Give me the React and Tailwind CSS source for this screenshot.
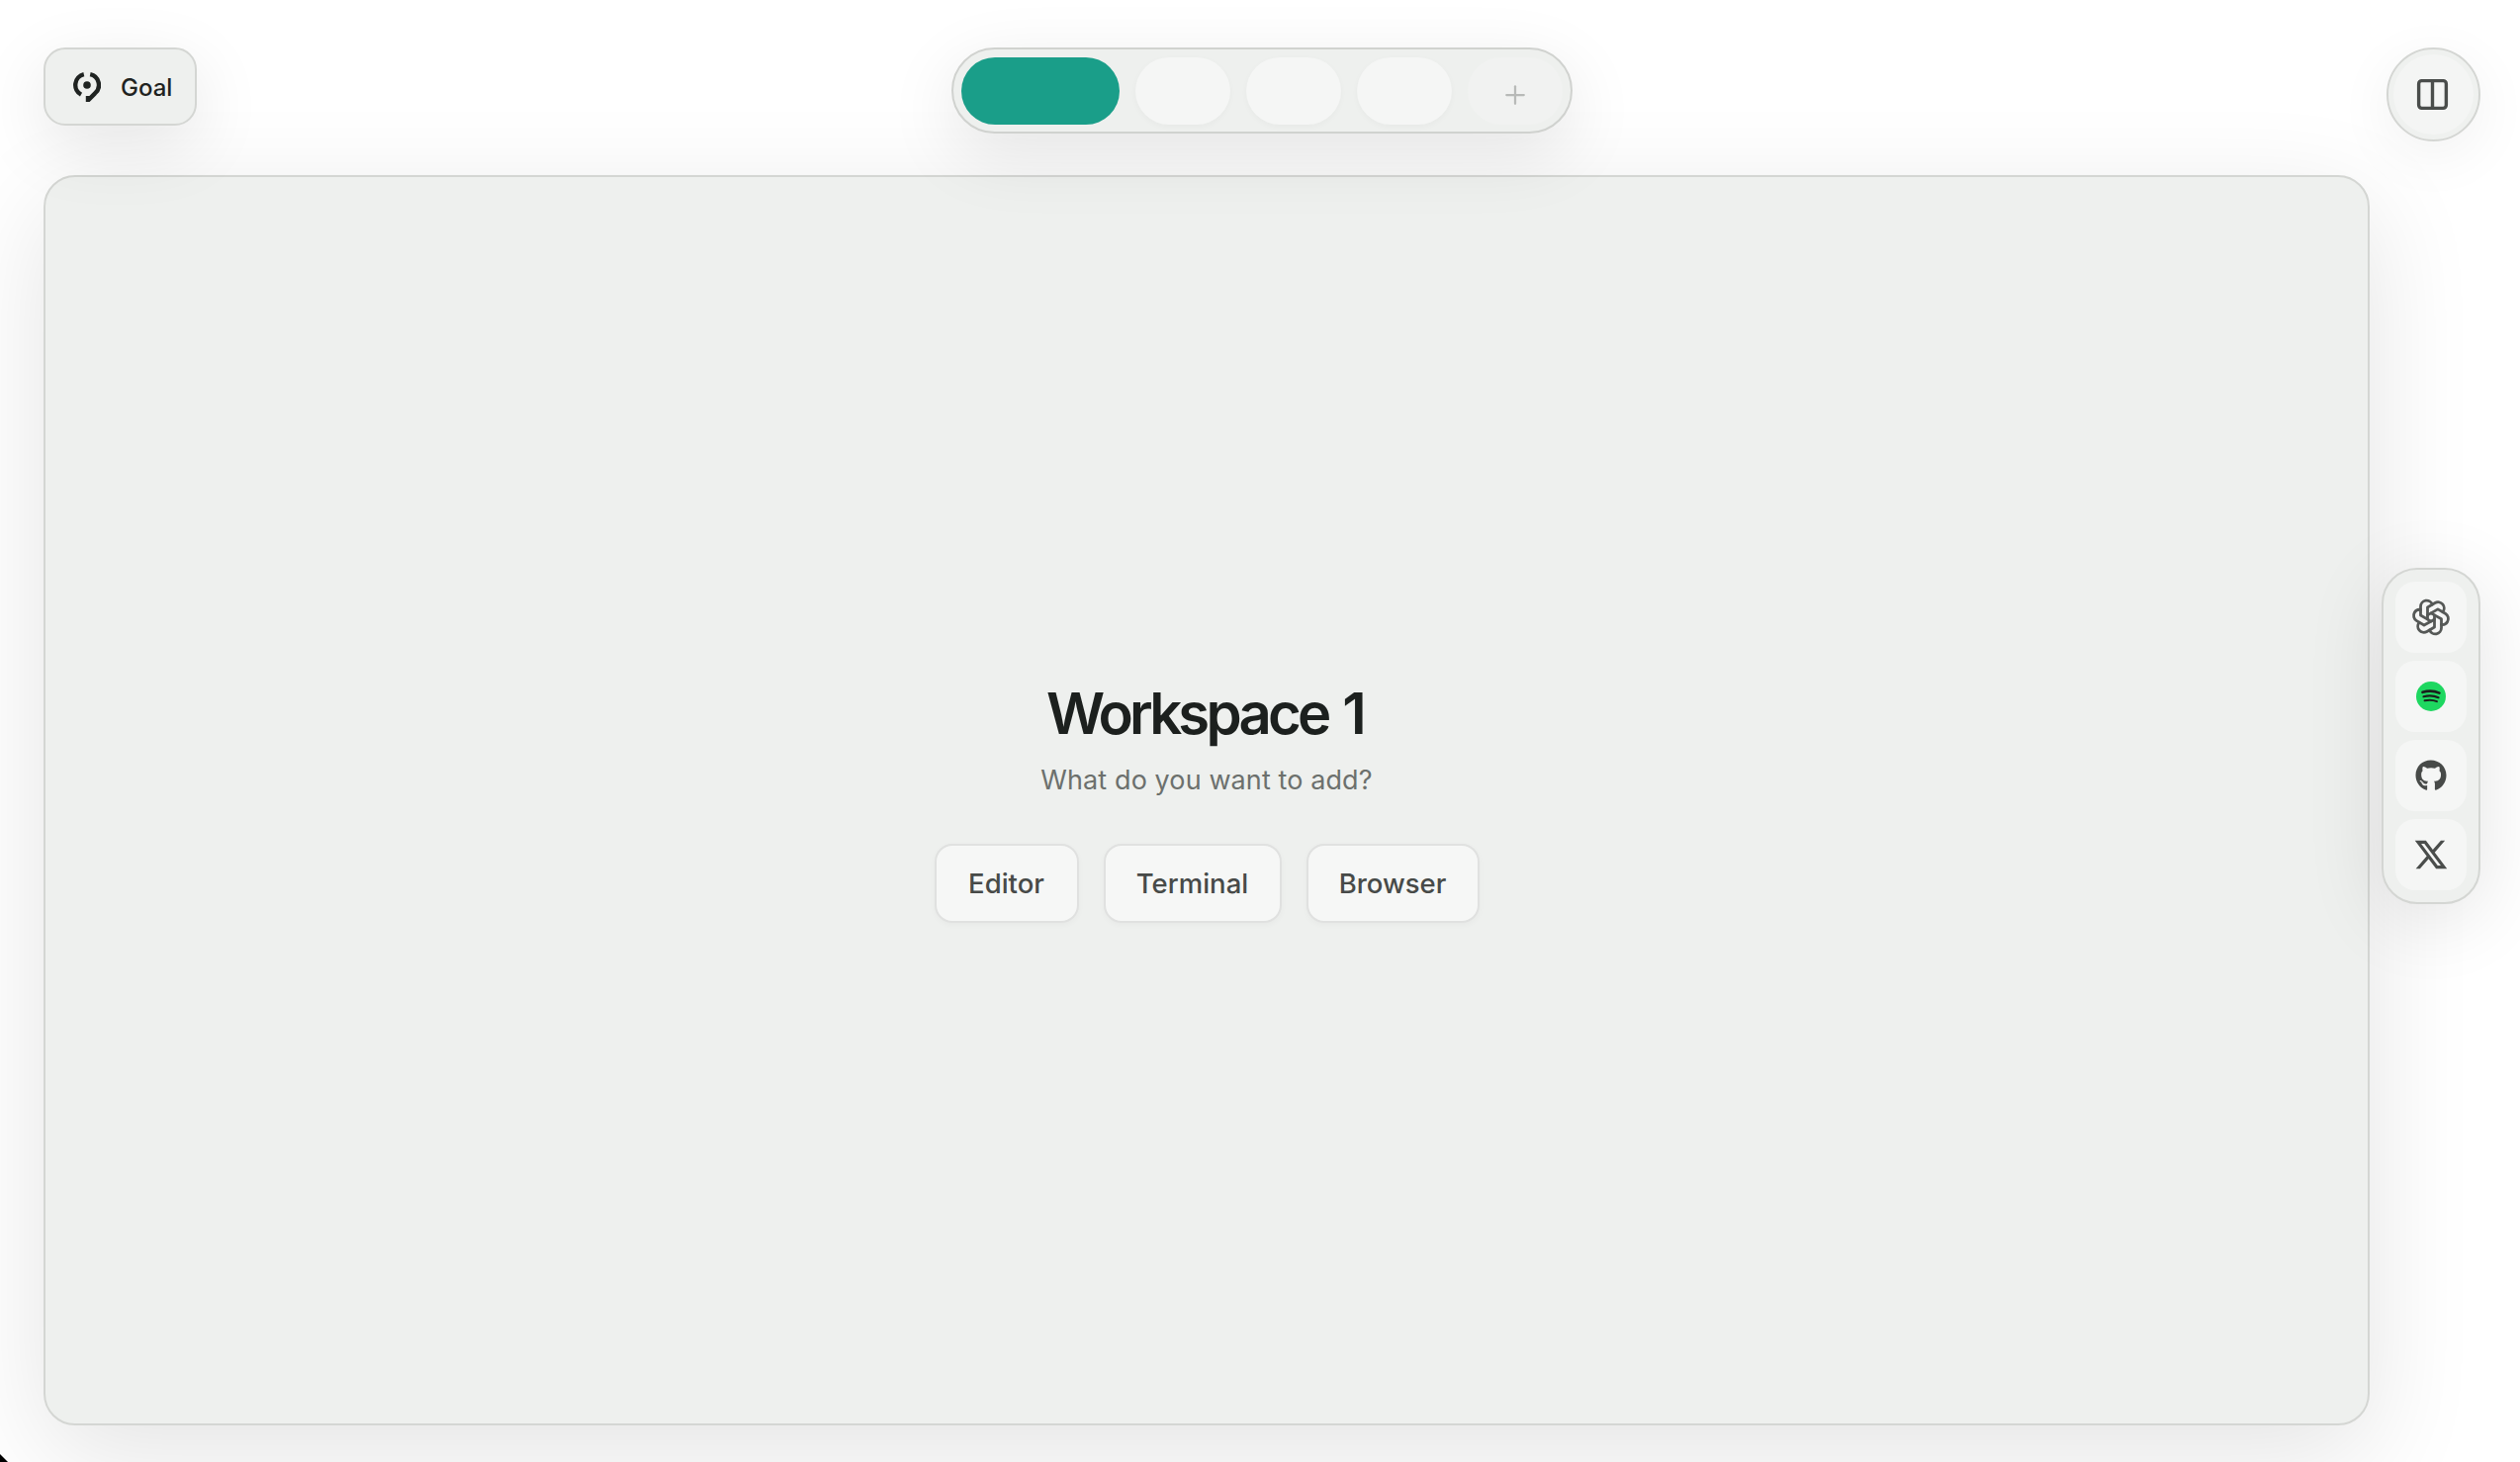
import { Columns2, Plus } from "lucide-react";
import { TbBrandOpenai } from "react-icons/tb";
import { FaGithub } from "react-icons/fa";
import { RiTwitterXLine } from "react-icons/ri";

function GoalIcon() {
  return (
    <svg width="28" height="30" viewBox="0 0 28 30" fill="none" className="text-[#1f2321] -ml-[1px]">
      <circle cx="14" cy="13" r="3.8" fill="currentColor" />
      <path d="M10.8 2.2A11 11 0 0 0 8 22.6" stroke="currentColor" strokeWidth="4.4" />
      <path d="M17.2 2.2A11 11 0 0 1 22 21.4L15 28.5V24" stroke="currentColor" strokeWidth="4.4" />
    </svg>
  );
}

function SpotifyIcon() {
  return (
    <svg width="30" height="30" viewBox="0 0 30 30" fill="none">
      <circle cx="15" cy="15" r="15" fill="#1ed760" />
      <path d="M6.5 10.8C12 9.2 18.5 9.4 23.5 11.6" stroke="#1a1f1c" strokeWidth="2.6" strokeLinecap="round" />
      <path d="M7.5 15.2C12.5 14 18 14.2 22.5 16.2" stroke="#1a1f1c" strokeWidth="2.2" strokeLinecap="round" />
      <path d="M8.5 19.3C12.5 18.4 17.5 18.6 21 20.2" stroke="#1a1f1c" strokeWidth="1.9" strokeLinecap="round" />
    </svg>
  );
}

function Tab({ children, className }) {
  return (
    <div className={`w-[96px] h-[68px] rounded-[34px] flex items-center justify-center ${className}`}>
      {children}
    </div>
  );
}

function DockItem({ children }) {
  return (
    <div className="w-[72px] h-[72px] rounded-[20px] bg-[#f5f6f5] flex items-center justify-center">
      {children}
    </div>
  );
}

function AddButton({ label, className }) {
  return (
    <button className={`h-[80px] pt-[2px] rounded-[18px] border-2 border-[#e0e1e0] bg-[#f6f7f6] text-[27.5px] font-medium text-[#474a48] shadow-[0_2px_6px_rgba(0,0,0,0.03)] ${className}`}>
      {label}
    </button>
  );
}

export default function App() {
  return (
    <div className="relative w-full h-screen overflow-hidden bg-white pt-[48px] font-['Inter',sans-serif]">
      {/* top bar */}
      <div className="relative z-10 h-[95px] pl-[44px] pr-[40px] grid grid-cols-[1fr_auto_1fr] items-start">
        <div>
          <button className="w-[155px] h-[79px] rounded-[22px] border-2 border-[#d4d6d3] bg-[#eef0ee] flex items-center pl-[29px] gap-[20px] text-[24px] font-medium text-[#1f2321] shadow-[0_20px_70px_rgba(0,0,0,0.1)]">
            <GoalIcon />
            <span className="pt-[2px]">Goal</span>
          </button>
        </div>

        <div className="h-[87px] rounded-[44px] border-2 border-[#d0d2cf] bg-[#eef0ee] p-[8px] flex gap-[16px] shadow-[0_20px_70px_rgba(0,0,0,0.1)]">
          <div className="w-[160px] h-[68px] rounded-[34px] bg-[#1a9e89]" />
          <Tab className="bg-[#f5f6f5] shadow-[0_2px_6px_rgba(0,0,0,0.03)]" />
          <Tab className="bg-[#f5f6f5] shadow-[0_2px_6px_rgba(0,0,0,0.03)]" />
          <Tab className="bg-[#f5f6f5] shadow-[0_2px_6px_rgba(0,0,0,0.03)]" />
          <Tab className="bg-[#f1f2f1] pt-[8px]">
            <Plus size={30} strokeWidth={1.8} className="text-[#b8bab8]" />
          </Tab>
        </div>

        <div className="flex justify-end">
          <button className="w-[95px] h-[95px] rounded-full border-2 border-[#d4d6d3] bg-[#f4f5f4] flex items-center justify-center shadow-[inset_0_0_0_5px_#eff1ef,0_14px_60px_rgba(0,0,0,0.06)]">
            <Columns2 size={37} strokeWidth={2.2} className="text-[#4a4d4b] -ml-[2px]" />
          </button>
        </div>
      </div>

      {/* main area */}
      <div className="mt-[34px] pl-[44px] flex items-start gap-[12px]">
        <div className="w-[2352px] h-[1264px] rounded-[32px] border-2 border-[#d4d6d3] bg-[#eef0ee] flex flex-col items-center justify-center shadow-[0_30px_110px_rgba(0,0,0,0.11)]">
          <h1 className="-ml-[4px] text-[58px] leading-[70px] font-semibold tracking-[-3.8px] [word-spacing:4px] text-[#1c201e]">Workspace 1</h1>
          <p className="mt-[13px] text-[27px] leading-[40px] tracking-[0.1px] text-[#6c706d]">What do you want to add?</p>
          <div className="mt-[44px] flex gap-[25px]">
            <AddButton label="Editor" className="w-[146px]" />
            <AddButton label="Terminal" className="w-[180px]" />
            <AddButton label="Browser" className="w-[175px]" />
          </div>
        </div>

        {/* app dock */}
        <div className="mt-[397px] w-[100px] rounded-[36px] border-2 border-[#d4d6d3] bg-[#eef0ee] p-[12px] flex flex-col gap-[8px] shadow-[0_14px_80px_rgba(0,0,0,0.11)]">
          <DockItem><TbBrandOpenai size={42} strokeWidth={1.6} className="text-[#555856]" /></DockItem>
          <DockItem><SpotifyIcon /></DockItem>
          <DockItem><FaGithub size={32} className="text-[#474a48]" /></DockItem>
          <DockItem><RiTwitterXLine size={38} className="text-[#4a4d4b]" /></DockItem>
        </div>
      </div>

      {/* window corner */}
      <div className="absolute left-0 bottom-0 w-[8px] h-[8px] bg-black [clip-path:polygon(0_0,100%_100%,0_100%)]" />
    </div>
  );
}
